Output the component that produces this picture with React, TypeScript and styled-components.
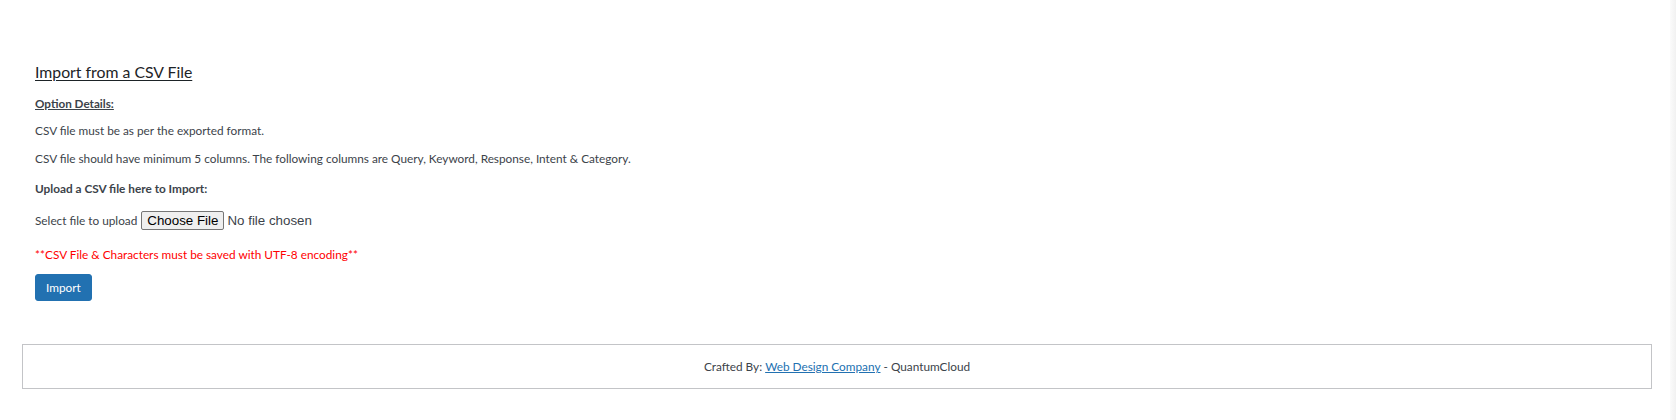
import React from 'react';
import styled, { createGlobalStyle } from 'styled-components';

const GlobalStyle = createGlobalStyle`
	html, body {
		margin: 0;
		padding: 0;
		background: #ffffff;
	}
	body {
		font-family: Lato, "Open Sans", sans-serif;
		font-size: 11.8px;
		color: #3c434a;
	}
`;

function App() {
	return (
		<>
			<GlobalStyle />
			<Pagina>
				<Conteudo>
					<Secao>
						<Titulo>Import from a CSV File</Titulo>
						<SubTitulo>Option Details:</SubTitulo>
						<Paragrafo>CSV file must be as per the exported format.</Paragrafo>
						<Paragrafo>CSV file should have minimum 5 columns. The following columns are Query, Keyword, Response, Intent &amp; Category.</Paragrafo>
						<Rotulo>Upload a CSV file here to Import:</Rotulo>
						<LinhaArquivo>
							Select file to upload <InputArquivo type="file" />
						</LinhaArquivo>
						<Aviso>**CSV File &amp; Characters must be saved with UTF-8 encoding**</Aviso>
						<BotaoImportar type="button">Import</BotaoImportar>
					</Secao>
					<Rodape>
						Crafted By: <LinkRodape href="#">Web Design Company</LinkRodape> - QuantumCloud
					</Rodape>
				</Conteudo>
				<BordaDireita />
			</Pagina>
		</>
	);
}

export default App;

const Pagina = styled.div`
	display: flex;
	flex-direction: row;
	width: 1676px;
	height: 420px;
	overflow: hidden;
`;

const Conteudo = styled.div`
	flex: 1;
	display: flex;
	flex-direction: column;
	padding: 0 18px 0 22px;
`;

const Secao = styled.div`
	display: flex;
	flex-direction: column;
	align-items: flex-start;
	padding: 62px 0 0 13px;
`;

const Titulo = styled.h2`
	margin: 0;
	font-size: 15.8px;
	font-weight: 400;
	line-height: 20px;
	color: #1d2327;
	text-decoration: underline;
	text-underline-offset: 2px;
`;

const SubTitulo = styled.p`
	margin: 13px 0 0;
	font-size: 11.7px;
	font-weight: 700;
	line-height: 16px;
	text-decoration: underline;
`;

const Paragrafo = styled.p`
	margin: 11px 0 0;
	line-height: 17px;

	&:first-of-type {
		margin-top: 14px;
	}
`;

const Rotulo = styled.p`
	margin: 13px 0 0;
	font-weight: 700;
	line-height: 17px;
`;

const LinhaArquivo = styled.div`
	display: flex;
	align-items: center;
	gap: 4px;
	margin-top: 12px;
	height: 22px;
`;

const InputArquivo = styled.input`
	font-family: "Liberation Sans", Arial, sans-serif;
	font-size: 13.33px;
	color: #3c434a;

	&::file-selector-button {
		font-family: "Liberation Sans", Arial, sans-serif;
		font-size: 13.33px;
		color: #000;
		background: #efefef;
		border: 1px solid #767676;
		border-radius: 2px;
		padding: 1px 5px;
		margin-right: 3px;
	}
`;

const Aviso = styled.p`
	margin: 15px 0 0;
	line-height: 17px;
	color: #ff0000;
`;

const BotaoImportar = styled.button`
	margin-top: 11px;
	height: 27px;
	padding: 0 10px;
	font-family: Lato, "Open Sans", sans-serif;
	font-size: 11.8px;
	font-weight: 400;
	color: #ffffff;
	background: #2271b1;
	border: 1px solid #2271b1;
	border-radius: 3px;
	cursor: pointer;
`;

const Rodape = styled.div`
	margin-top: 43px;
	height: 43px;
	display: flex;
	align-items: center;
	justify-content: center;
	white-space: pre;
	border: 1px solid #c3c4c7;
	font-size: 11.8px;
	color: #3c434a;
`;

const LinkRodape = styled.a`
	color: #2271b1;
	text-decoration: underline;
`;

const BordaDireita = styled.div`
	width: 6px;
	background: linear-gradient(to right, #fbfbfb, #f1f1f1);
`;
